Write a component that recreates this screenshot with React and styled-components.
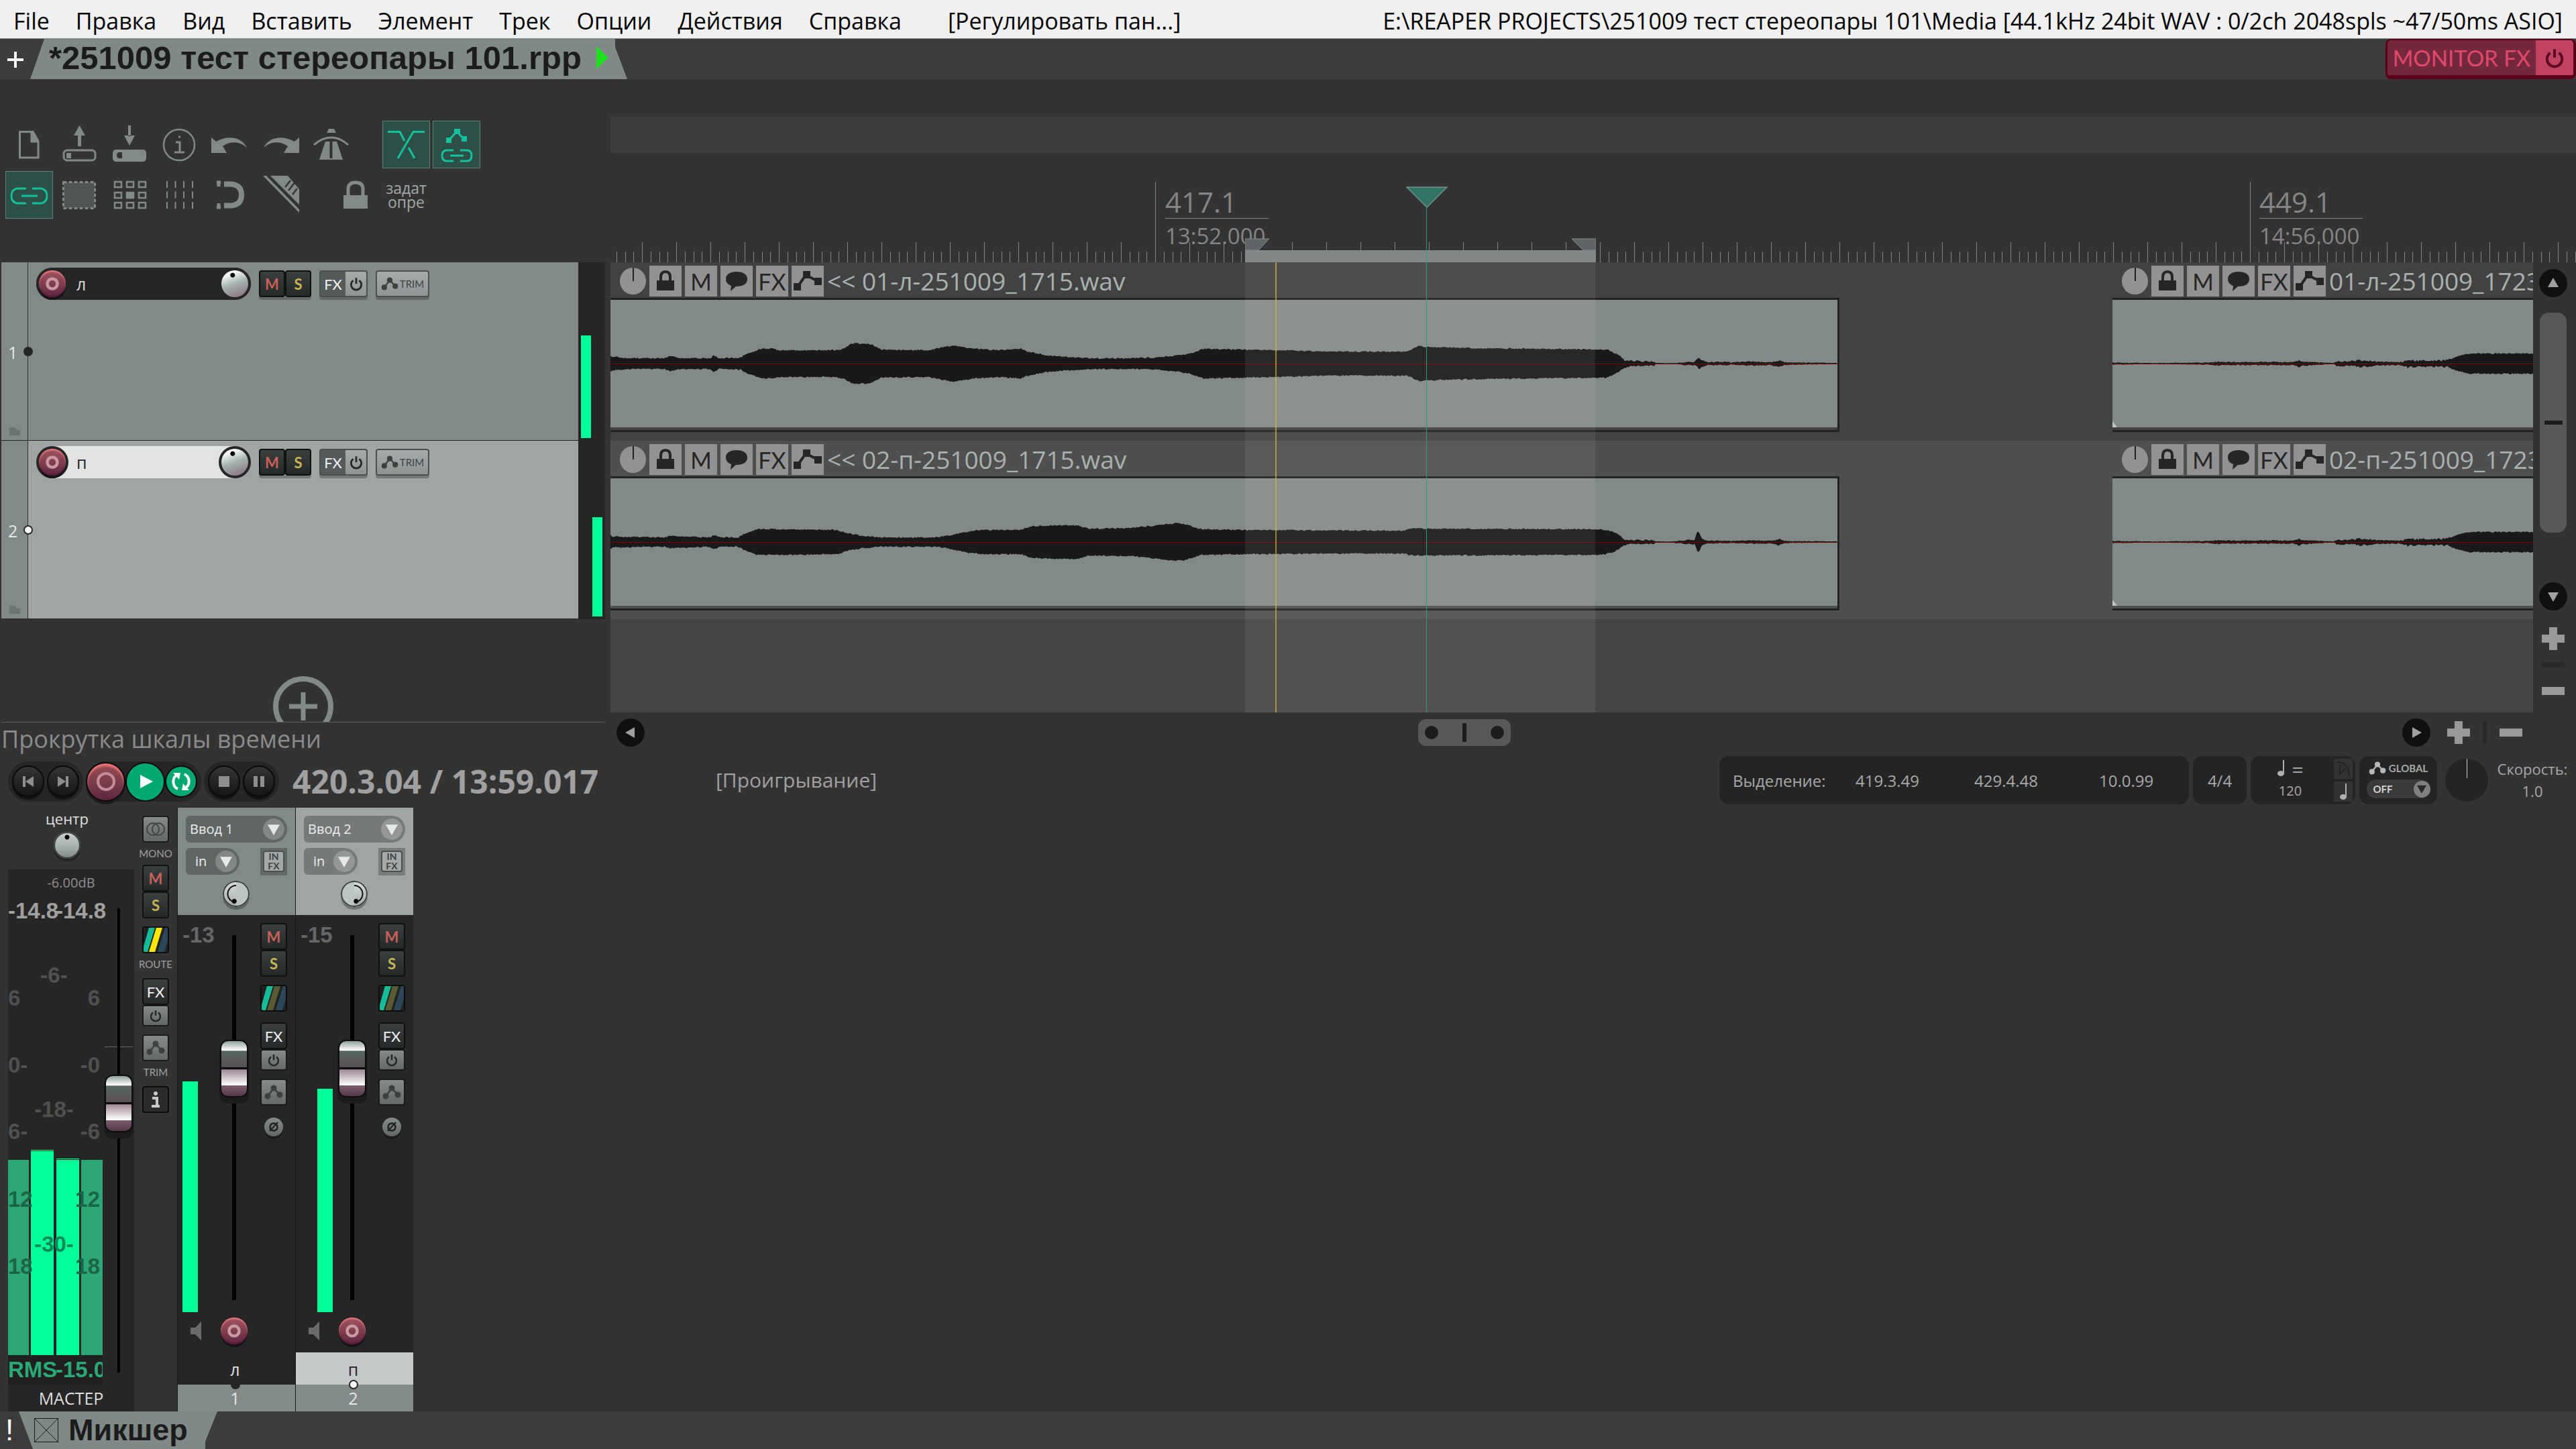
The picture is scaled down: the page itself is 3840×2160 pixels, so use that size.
import { useState } from "react";
import styled, { createGlobalStyle, css } from "styled-components";

const MENU = ["File", "Правка", "Вид", "Вставить", "Элемент", "Трек", "Опции", "Действия", "Справка"];

const TRACKS = [
  { id: 1, name: "л", selected: false, levels: [153, 0], volume: "-13", mixLevels: [344, 0], input: "Ввод 1" },
  { id: 2, name: "п", selected: true, levels: [0, 148], volume: "-15", mixLevels: [0, 333], input: "Ввод 2" },
];

// [x, half amplitude]
const WAVE_L1 = [[0, 12], [15, 10], [28, 9], [79, 9], [89, 12], [105, 9], [149, 9], [154, 13], [162, 9], [194, 10], [204, 16], [226, 23], [242, 23], [251, 21], [334, 21], [347, 23], [360, 31], [380, 31], [390, 29], [404, 22], [475, 21], [494, 25], [510, 28], [522, 26], [545, 23], [577, 21], [612, 23], [621, 19], [647, 14], [679, 11], [717, 9], [774, 9], [813, 10], [844, 13], [864, 16], [883, 23], [990, 21], [1075, 19], [1188, 19], [1205, 27], [1216, 26], [1290, 24], [1480, 22], [1486, 22], [1500, 15], [1512, 7], [1530, 5], [1556, 4], [1558, 1], [1590, 1], [1600, 3], [1615, 3], [1622, 9], [1630, 5], [1635, 3], [1667, 3], [1670, 2], [1690, 4], [1730, 3], [1742, 6], [1750, 3], [1780, 2], [1829, 1]];
const WAVE_R1 = [[0, 11], [4, 9], [81, 8], [87, 10], [147, 8], [155, 11], [166, 8], [190, 8], [202, 14], [217, 20], [281, 20], [338, 19], [353, 14], [378, 10], [402, 8], [487, 8], [511, 12], [535, 17], [553, 19], [612, 19], [626, 24], [656, 26], [695, 26], [713, 21], [778, 22], [814, 26], [842, 29], [856, 28], [881, 20], [947, 19], [1183, 18], [1192, 21], [1216, 21], [1478, 20], [1496, 16], [1511, 6], [1517, 4], [1555, 4], [1558, 1], [1583, 1], [1604, 4], [1616, 4], [1621, 18], [1627, 6], [1633, 3], [1668, 2], [1692, 3], [1735, 3], [1741, 7], [1747, 3], [1759, 2], [1829, 1]];
const WAVE_2 = [[0, 2], [60, 1], [141, 2], [156, 3], [160, 4], [171, 3], [271, 3], [278, 7], [285, 4], [300, 3], [331, 1], [334, 5], [351, 4], [373, 7], [391, 4], [431, 3], [441, 8], [451, 6], [491, 6], [503, 8], [516, 12], [531, 16], [640, 16]];

const noise = (n) => {
  const s = Math.sin(n * 127.1) * 43758.5453;
  return s - Math.floor(s);
};

function wavePath(points, mid) {
  const last = points[points.length - 1][0];
  const top = [];
  const bottom = [];
  let seg = 0;
  for (let x = 0; x <= last; x += 2) {
    while (points[seg + 1][0] < x) seg++;
    const [x0, a0] = points[seg];
    const [x1, a1] = points[seg + 1];
    const amp = a0 + ((a1 - a0) * (x - x0)) / (x1 - x0);
    const spread = amp < 8 ? amp * 0.5 : 2;
    top.push(`${x} ${(mid - amp + noise(x) * spread).toFixed(1)}`);
    bottom.unshift(`${x} ${(mid + amp - noise(x + 7) * spread).toFixed(1)}`);
  }
  return `M${top.join("L")}L${bottom.join("L")}Z`;
}

const CLIPS = [
  [
    { name: "<< 01-л-251009_1715.wav", wave: WAVE_L1, ends: true },
    { name: "01-л-251009_1723.wav", wave: WAVE_2 },
  ],
  [
    { name: "<< 02-п-251009_1715.wav", wave: WAVE_R1, ends: true },
    { name: "02-п-251009_1723.wav", wave: WAVE_2 },
  ],
];

/* ---------- icons ---------- */

const Svg = ({ w = 71, h = w, box, children }) => (
  <svg width={w} height={h} viewBox={box || `0 0 ${w} ${h}`} fill="none" aria-hidden="true">{children}</svg>
);

const GREY = "#828a88";
const TEAL = "#14bf9c";

const TOOL_ICONS = {
  file: (
    <>
      <path d="M21.5 16.5H39V31H49V55H21.5Z" stroke={GREY} strokeWidth="3" />
      <path d="M38 15H42L50 29V32H38Z" fill={GREY} />
    </>
  ),
  upload: (
    <>
      <rect x="12" y="44" width="47" height="15" rx="5" stroke={GREY} strokeWidth="3" />
      <path d="M16 48h7v8h-7zM33 22h5v16h-5zM27 22L35.500 7 44 22z" fill={GREY} />
    </>
  ),
  download: (
    <>
      <rect x="10" y="43" width="50" height="18" rx="5" fill={GREY} />
      <path d="M33 7h4v16h-4zM27 22L35 37 43 22z" fill={GREY} />
      <path d="M24 47h-6q-4 4.500 0 9h6z" fill="#333" />
    </>
  ),
  info: (
    <>
      <circle cx="34" cy="36" r="23" stroke={GREY} strokeWidth="2.500" />
      <path d="M29 32h6v15M27 47h15M33 24h3" stroke={GREY} strokeWidth="3" />
    </>
  ),
  undo: <path d="M7 25L14 31C32 21 52 24 60 40C49 30 34 30 24 38L30 48H7Z" fill={GREY} />,
  redo: <path d="M63 25L56 31C38 21 18 24 10 40C21 30 36 30 46 38L40 48H63Z" fill={GREY} />,
  metronome: (
    <>
      <path d="M27 31H44L53 58H18Z" fill={GREY} />
      <path d="M35.500 29V56" stroke="#333" strokeWidth="4" />
      <path d="M10 36Q22 25 35.500 25T61 36" stroke={GREY} strokeWidth="3" />
      <path d="M29 18L32 12H40L43 18Z" fill={GREY} />
    </>
  ),
  crossfade: <path d="M8 16.500H26L33 30M63 16.500H46L23 56M39 40L48 56" stroke={TEAL} strokeWidth="3" />,
  envelope: (
    <>
      <path d="M24 29L36 16L47 28" stroke={TEAL} strokeWidth="3" />
      <path d="M20 25h8v8h-8zM32 12h9v8h-9zM43 23h8v8h-8z" fill={TEAL} />
      <path d="M31 44H21q-7 0-7 8t7 8h10M41 44h10q7 0 7 8t-7 8H41M26 52h20" stroke={TEAL} strokeWidth="3" />
    </>
  ),
  link: <path d="M31 26H17q-8 2-8 11t8 11H31M40 26H54q8 2 8 11t-8 11H40M24 37h24" stroke={TEAL} strokeWidth="3" />,
  marquee: (
    <>
      <rect x="12" y="17" width="46" height="38" fill="#505656" />
      <rect x="11.500" y="16.500" width="47" height="39" stroke={GREY} strokeWidth="3" strokeDasharray="5 3" />
    </>
  ),
  grid: (
    <>
      {[17, 35, 53].map((x) => [20, 36, 51].map((y) => (
        <rect key={`${x}-${y}`} x={x - 4} y={y - 4} width="10" height="8" stroke={GREY} strokeWidth="2.500" fill={x === 35 && y === 36 ? GREY : "none"} />
      )))}
    </>
  ),
  lines: <path d="M16 15v41M28.500 15v41M41 15v41M54 15v41" stroke={GREY} strokeWidth="2" strokeDasharray="10 5.500" />,
  magnet: (
    <>
      <path d="M26 19.500H37Q52 21 52 35.500T37 51.500H26" stroke={GREY} strokeWidth="8" />
      <path d="M15 17h6M18 15v8M15 54h6M18 48v8" stroke={GREY} strokeWidth="5" />
    </>
  ),
  ruler: (
    <>
      <path d="M9 7H14L63 57V62Z" fill={GREY} />
      <path d="M20 7H46L63 27V50Z" fill={GREY} />
      <path d="M47 29L58 15M42 24L50 14M53 35L60 26" stroke="#333" strokeWidth="2.500" />
    </>
  ),
  lock: (
    <>
      <path d="M24 37V27q0-10 11-10t11 10V37" stroke={GREY} strokeWidth="5" />
      <rect x="17" y="36" width="36" height="20" fill={GREY} />
    </>
  ),
};

const Power = ({ size = 20, color = "#262626" }) => (
  <Svg w={size} box="0 0 20 20">
    <path d="M6 5.500a7 7 0 1 0 8 0M10 2v8" stroke={color} strokeWidth="2.500" />
  </Svg>
);

const Nodes = ({ size = 28, color = "#3c4040" }) => (
  <Svg w={size} h={size - 6} box="0 0 28 22">
    <path d="M5 17L14 5L23 15" stroke={color} strokeWidth="2.500" />
    <g fill={color}><circle cx="5" cy="17" r="4.500" /><circle cx="14" cy="5" r="4.500" /><circle cx="23" cy="15" r="4.500" /></g>
  </Svg>
);

const Arrow = ({ dir, size = 16, color = "#a0a0a0" }) => {
  const turn = { right: 0, down: 90, left: 180, up: 270 }[dir];
  return (
    <Svg w={size} box="0 0 16 16">
      <path d="M2 0L16 8L2 16Z" fill={color} transform={`rotate(${turn} 8 8)`} />
    </Svg>
  );
};

const Plus = () => <Svg w={34}><path d="M11 0h12v11h11v12H23v11H11V23H0V11h11z" fill="#999" /></Svg>;
const Minus = () => <Svg w={34} h={12}><rect width="34" height="12" fill="#999" /></Svg>;

const Note = () => (
  <Svg w={12} h={24}>
    <path d="M10 0V19" stroke="#b0b0b0" strokeWidth="2" />
    <ellipse cx="6" cy="20" rx="5" ry="4" fill="#b0b0b0" />
  </Svg>
);

const Route = ({ bright }) => (
  <Svg w={36}>
    <rect width="36" height="36" fill="#1f2423" />
    <path d="M0 36V28L8 0H17L6 36Z" fill="#17bd9b" />
    <path d="M8 36L19 0H28L17 36Z" fill={bright ? "#ffe600" : "#5a5a33"} />
    <path d="M21 36L32 0H36V20L31 36Z" fill="#2d4759" />
  </Svg>
);

const Folder = () => <Svg w={16} h={12}><path d="M0 0H8L11 4H16V12H0Z" fill="#6c7472" /></Svg>;

const ITEM_ICONS = [
  ["Lock", <Svg key="l" w={28} h={32}><path d="M7 15V10q0-8 7-8t7 8v5" stroke="#262626" strokeWidth="4" /><path d="M1 15h26v15H1z" fill="#262626" /></Svg>],
  ["Mute", "M"],
  ["Notes", <Svg key="n" w={34} h={32}><path d="M17 2c10 0 16 4 16 11s-6 11-16 11h-1l-8 7 1-8C4 21 1 18 1 13 1 6 7 2 17 2z" fill="#262626" /></Svg>],
  ["Item FX", "FX"],
  ["Envelope", <Svg key="e" w={42} h={32}><path d="M5 26L18 7L36 16" stroke="#262626" strokeWidth="4" /><path d="M0 19h11v11H0zM14 1h11v11H14zM31 11h11v11H31z" fill="#262626" /></Svg>],
];

/* ---------- sections ---------- */

function MenuBar() {
  return (
    <Menu>
      {MENU.map((label) => <MenuButton key={label}>{label}</MenuButton>)}
      <MenuButton $wide>[Регулировать пан...]</MenuButton>
      <MenuStatus>E:\REAPER PROJECTS\251009 тест стереопары 101\Media [44.1kHz 24bit WAV : 0/2ch 2048spls ~47/50ms ASIO]</MenuStatus>
    </Menu>
  );
}

function ProjectTabs() {
  return (
    <TabBar>
      <NewTab aria-label="New project tab">
        <Svg w={24}><path d="M12 0V24M0 12H24" stroke="#fff" strokeWidth="4" /></Svg>
      </NewTab>
      <ProjectTab>
        *251009 тест стереопары 101.rpp
        <Svg w={18} h={34}><path d="M0 0L18 17L0 34Z" fill="#1fe01f" /></Svg>
      </ProjectTab>
      <MonitorFx>
        <MonitorLabel>MONITOR FX</MonitorLabel>
        <MonitorPower aria-label="Monitor FX bypass"><Power size={32} color="#5f0a22" /></MonitorPower>
      </MonitorFx>
    </TabBar>
  );
}

const ToolButton = ({ icon, active }) => (
  <Tool $active={active} aria-label={icon}><Svg w={71}>{TOOL_ICONS[icon]}</Svg></Tool>
);

function Toolbar() {
  return (
    <Tools>
      <ToolRow>
        {["file", "upload", "download", "info", "undo", "redo", "metronome"].map((i) => <ToolButton key={i} icon={i} />)}
        <ToolGap />
        <ToolButton icon="crossfade" active />
        <ToolButton icon="envelope" active />
      </ToolRow>
      <ToolRow>
        <ToolButton icon="link" active />
        {["marquee", "grid", "lines", "magnet", "ruler"].map((i) => <ToolButton key={i} icon={i} />)}
        <ToolGap />
        <ToolButton icon="lock" />
        <Tool>задат опре</Tool>
      </ToolRow>
    </Tools>
  );
}

const RecordDot = () => (
  <Svg w={20}><circle cx="10" cy="10" r="7.500" stroke="#c79aa3" strokeWidth="4.500" /></Svg>
);

function TrackPanel({ track }) {
  const [name, setName] = useState(track.name);
  return (
    <Panel>
      <PanelNumber>
        <NumberText>{track.id}</NumberText>
        <Folder />
        <FolderDot $selected={track.selected} />
      </PanelNumber>
      <PanelMain $selected={track.selected}>
        <NameBox $selected={track.selected}>
          <KnobRing><RecordArm aria-label="Record arm"><RecordDot /></RecordArm></KnobRing>
          <NameInput aria-label="Track name" $selected={track.selected} value={name} onChange={(e) => setName(e.target.value)} />
          <KnobRing><Knob type="range" aria-label="Volume" $tint $dot="42% 18%" /></KnobRing>
        </NameBox>
        <PanelButtons>
          <Pair><MiniButton $dark $color="#cb6058">M</MiniButton><MiniButton $dark $color="#c9b455">S</MiniButton></Pair>
          <Pair>
            <MiniButton $mid $color="#f2f2f2">FX</MiniButton>
            <MiniButton $narrow aria-label="FX bypass"><Power size={22} /></MiniButton>
          </Pair>
          <TrimButton><Nodes size={26} />TRIM</TrimButton>
        </PanelButtons>
      </PanelMain>
      <PanelMeter>
        {track.levels.map((h, i) => <Bar key={i} $w={15} style={{ height: h }} />)}
      </PanelMeter>
    </Panel>
  );
}

const PX_PER_MEASURE = 51;

function RulerTicks() {
  const ticks = [];
  for (let k = -63; k < 168; k++) {
    const x = Math.round(812 + (k * PX_PER_MEASURE) / 4);
    const top = k % 128 === 0 ? 43 : k % 4 === 0 ? 133 : 147;
    ticks.push(<path key={k} d={`M${x + 0.5} ${top}V163`} />);
  }
  return <TickLayer width="100%" height="163" aria-hidden="true" stroke="#858585">{ticks}</TickLayer>;
}

function Ruler() {
  return (
    <RulerBox>
      <RulerTicks />
      <RulerMark><b>417.1</b><span>13:52.000</span></RulerMark>
      <RulerMark><b>449.1</b><span>14:56.000</span></RulerMark>
      <RulerSelection>
        <Svg w={523} h={36}>
          <path d="M0 18H523V36H0Z" fill="#828887" />
          <path d="M0 1H36L20 18H0Z" fill="#5f6567" stroke="#858b8a" />
          <path d="M523 1H487L504 18H523Z" fill="#5f6567" stroke="#858b8a" />
        </Svg>
      </RulerSelection>
      <PlayMarker>
        <Svg w={62} h={113}>
          <path d="M1 1H61L31 31Z" fill="#337266" stroke="#74908a" strokeWidth="1.500" />
          <path d="M30.500 31V113" stroke="#2f9d86" />
        </Svg>
      </PlayMarker>
    </RulerBox>
  );
}

function Clip({ clip }) {
  return (
    <ClipBox $ends={clip.ends}>
      <ClipHead>
        <ItemKnob type="range" aria-label="Item volume" />
        {ITEM_ICONS.map(([label, icon]) => <ItemButton key={label} aria-label={label}>{icon}</ItemButton>)}
        <ClipName>{clip.name}</ClipName>
      </ClipHead>
      <ClipBody $ends={clip.ends}>
        <svg width="100%" height="190" aria-hidden="true">
          <path d={wavePath(clip.wave, 95)} fill="#191919" />
          <path d="M0 95.500H1900" stroke="#7c0000" />
          {!clip.ends && <path d="M0 181L7 190H0Z" fill="#c0c6c5" />}
        </svg>
      </ClipBody>
      <ClipFoot $ends={clip.ends} />
    </ClipBox>
  );
}

function Arrange() {
  return (
    <ArrangeGrid>
      <LeftColumn>
        <Toolbar />
        <Panels>{TRACKS.map((t) => <TrackPanel key={t.id} track={t} />)}</Panels>
        <AddArea>
          <AddTrack aria-label="Add track">
            <Svg w={90}><circle cx="45" cy="45" r="41" stroke={GREY} strokeWidth="8" /><path d="M45 24V66M24 45H66" stroke={GREY} strokeWidth="7" /></Svg>
          </AddTrack>
        </AddArea>
        <Hint>Прокрутка шкалы времени</Hint>
      </LeftColumn>
      <RightColumn>
        <MarkerStrip />
        <Ruler />
        <LanesRow>
          <Lanes>
            {CLIPS.map((lane, i) => (
              <Lane key={i} $alt={i === 1}>{lane.map((c) => <Clip key={c.name} clip={c} />)}</Lane>
            ))}
            <SelectionOverlay />
            <EditCursor />
            <PlayCursor />
          </Lanes>
          <VScroll>
            <RoundButton aria-label="Scroll up"><Arrow dir="up" /></RoundButton>
            <VThumb />
            <RoundButton aria-label="Scroll down"><Arrow dir="down" /></RoundButton>
            <ZoomStack>
              <Plain aria-label="Zoom in vertically"><Plus /></Plain>
              <ZoomMark $w={34} $h={8} />
              <Plain aria-label="Zoom out vertically"><Minus /></Plain>
            </ZoomStack>
          </VScroll>
        </LanesRow>
        <HScroll>
          <RoundButton aria-label="Scroll left"><Arrow dir="left" /></RoundButton>
          <HTrack><HThumb><i /><b /><i /></HThumb></HTrack>
          <RoundButton aria-label="Scroll right"><Arrow dir="right" /></RoundButton>
          <ZoomRow>
            <Plain aria-label="Zoom in"><Plus /></Plain>
            <ZoomMark $w={6} $h={34} />
            <Plain aria-label="Zoom out"><Minus /></Plain>
          </ZoomRow>
        </HScroll>
      </RightColumn>
    </ArrangeGrid>
  );
}

function Transport() {
  return (
    <TransportBar>
      <Pill>
        <RoundKey aria-label="Go to start"><Svg w={18}><path d="M1 1h4v16H1zM17 1v16L5 9z" fill="#8d8d8d" /></Svg></RoundKey>
        <RoundKey aria-label="Go to end"><Svg w={18}><path d="M13 1h4v16h-4zM1 1v16L13 9z" fill="#8d8d8d" /></Svg></RoundKey>
      </Pill>
      <Pill $tight>
        <RoundKey $big $red aria-label="Record"><Svg w={28}><circle cx="14" cy="14" r="12" stroke="#c08d98" strokeWidth="4" /></Svg></RoundKey>
        <RoundKey $big $green aria-label="Play"><Svg w={22}><path d="M3 1L22 11L3 21Z" fill="#fff" /></Svg></RoundKey>
        <RoundKey $green aria-label="Repeat">
          <Svg w={30}>
            <path d="M10 4.500A12 12 0 0 0 10 26M20 4A12 12 0 0 1 20 25.500" stroke="#fff" strokeWidth="4" />
            <path d="M3 2L14 2L12 12Z M27 28L16 28L18 18Z" fill="#fff" />
          </Svg>
        </RoundKey>
      </Pill>
      <Pill>
        <RoundKey aria-label="Stop"><Svg w={16}><rect width="16" height="16" fill="#8d8d8d" /></Svg></RoundKey>
        <RoundKey aria-label="Pause"><Svg w={16}><path d="M0 0h6v16H0zM10 0h6v16h-6z" fill="#8d8d8d" /></Svg></RoundKey>
      </Pill>
      <TimeText>420.3.04 / 13:59.017</TimeText>
      <PlayState>[Проигрывание]</PlayState>
      <Settings>
        <SelectionBox>
          <span>Выделение:</span><span>419.3.49</span><span>429.4.48</span><span>10.0.99</span>
        </SelectionBox>
        <SignatureBox>4/4</SignatureBox>
        <TempoBox>
          <TempoValue>
            <span><Note /> =</span>
            <small>120</small>
          </TempoValue>
          <TempoKeys>
            <TempoKey aria-label="Tap tempo"><Svg w={22} h={26}><path d="M2 3Q19 3 20 24M6 6V20L14 13" stroke="#222" strokeWidth="2" /></Svg></TempoKey>
            <TempoKey aria-label="Beat"><Note /></TempoKey>
          </TempoKeys>
        </TempoBox>
        <GlobalBox>
          <GlobalTitle><Nodes size={26} color="#b8b8b8" />GLOBAL</GlobalTitle>
          <GlobalSelect>
            <PlainSelect aria-label="Global automation"><option>OFF</option></PlainSelect>
            <SelectArrow $size={25} $bg="#808080"><Arrow dir="down" size={14} color="#2a2a2a" /></SelectArrow>
          </GlobalSelect>
        </GlobalBox>
        <RateKnob type="range" aria-label="Скорость" />
        <RateText><span>Скорость:</span><span>1.0</span></RateText>
      </Settings>
    </TransportBar>
  );
}

const SCALE_OUTER = [[103, "6", "6"], [203, "0-", "-0"], [302, "6-", "-6"], [403, "12", "12"], [503, "18", "18"]];
const SCALE_INNER = [[69, "-6-"], [269, "-18-"], [470, "-30-"]];

function MasterStrip() {
  return (
    <Master>
      <MasterLeft>
        <MasterPan>
          центр
          <Knob type="range" aria-label="Master pan" $dot="50% 20%" />
        </MasterPan>
        <MasterBox>
          <MasterDb>-6.00dB</MasterDb>
          <MasterRow>
            <MeterColumn>
              <Readout><span>-14.8</span><span>-14.8</span></Readout>
              <MeterArea>
                <Bar $w={31} $rms style={{ height: 291 }} />
                <Bar $w={34} $peak style={{ height: 304 }} />
                <Bar $w={34} $peak style={{ height: 291 }} />
                <Bar $w={32} $rms style={{ height: 291 }} />
                <ScaleLayer>
                  {SCALE_OUTER.map(([y, l, r]) => (
                    <ScaleLine key={y} $over={y > 340 && "#1b6446"} style={{ top: y }}><span>{l}</span><span>{r}</span></ScaleLine>
                  ))}
                  {SCALE_INNER.map(([y, l]) => (
                    <ScaleLine key={y} $center $over={y > 340 && "#078a55"} style={{ top: y }}>{l}</ScaleLine>
                  ))}
                </ScaleLayer>
              </MeterArea>
              <Readout $rms><span>RMS</span><span>-15.0</span></Readout>
            </MeterColumn>
            <MasterFader type="range" aria-label="Master volume" defaultValue="59" />
          </MasterRow>
          <MasterName>МАСТЕР</MasterName>
        </MasterBox>
      </MasterLeft>
      <MasterButtons>
        <MiniButton $grey aria-label="Mono">
          <Svg w={30} h={22}><circle cx="11" cy="11" r="9" stroke="#444" strokeWidth="2" /><circle cx="19" cy="11" r="9" stroke="#444" strokeWidth="2" /></Svg>
        </MiniButton>
        <Caption>MONO</Caption>
        <MiniButton $dark $color="#cb6058">M</MiniButton>
        <MiniButton $dark $color="#c9b455">S</MiniButton>
        <Spacer $h={12} />
        <MiniButton $route aria-label="Route"><Route bright /></MiniButton>
        <Caption>ROUTE</Caption>
        <Spacer $h={4} />
        <MiniButton $dark $light $color="#f2f2f2">FX</MiniButton>
        <MiniButton $grey $short aria-label="FX bypass"><Power size={20} /></MiniButton>
        <Spacer $h={12} />
        <MiniButton $grey aria-label="Trim"><Nodes /></MiniButton>
        <Caption>TRIM</Caption>
        <Spacer $h={4} />
        <MiniButton $outline aria-label="Track information">
          <Svg w={12} h={24}><path d="M1 10h7v13M0 22h12" stroke="#c8c8c8" strokeWidth="4" /><circle cx="6" cy="3" r="3" fill="#c8c8c8" /></Svg>
        </MiniButton>
      </MasterButtons>
    </Master>
  );
}

function ChannelStrip({ track }) {
  return (
    <Channel>
      <ChannelTop $selected={track.selected}>
        <InputSelect>
          <PlainSelect aria-label="Input"><option>{track.input}</option></PlainSelect>
          <SelectArrow $size={32}><Arrow dir="down" size={18} color="#e6e9e8" /></SelectArrow>
        </InputSelect>
        <InputRow>
          <InputSelect $short>
            <PlainSelect aria-label="Monitor"><option>in</option></PlainSelect>
            <SelectArrow $size={32}><Arrow dir="down" size={18} color="#e6e9e8" /></SelectArrow>
          </InputSelect>
          <InFx><button>IN FX</button></InFx>
        </InputRow>
        <Knob type="range" aria-label="Pan" $arc={track.selected ? "right" : "left"} $dot={track.selected ? "57% 78%" : "43% 78%"} />
      </ChannelTop>
      <ChannelBody>
        <ChannelMeter>
          <VolumeText>{track.volume}</VolumeText>
          <MeterPair>
            {track.mixLevels.map((h, i) => <Bar key={i} $w={23} style={{ height: h }} />)}
          </MeterPair>
        </ChannelMeter>
        <Fader type="range" aria-label="Volume" defaultValue="66" />
        <ChannelButtons>
          <MiniButton $dark $color="#cb6058">M</MiniButton>
          <MiniButton $dark $color="#c9b455">S</MiniButton>
          <Spacer $h={12} />
          <MiniButton $route aria-label="Route"><Route /></MiniButton>
          <Spacer $h={16} />
          <MiniButton $dark $light $color="#f2f2f2">FX</MiniButton>
          <MiniButton $grey $short aria-label="FX bypass"><Power size={20} /></MiniButton>
          <Spacer $h={12} />
          <MiniButton $grey aria-label="Trim"><Nodes /></MiniButton>
          <Spacer $h={18} />
          <PhaseButton aria-label="Phase">
            <Svg w={18}><circle cx="9" cy="9" r="5.500" stroke="#222" strokeWidth="2.500" /><path d="M3 15L15 2" stroke="#222" strokeWidth="2" /></Svg>
          </PhaseButton>
        </ChannelButtons>
      </ChannelBody>
      <ChannelRecord>
        <Svg w={16} h={28}><path d="M0 9h7L16 0V28L7 19H0Z" fill="#6b6b6b" /></Svg>
        <RecordArm aria-label="Record arm"><RecordDot /></RecordArm>
      </ChannelRecord>
      <ChannelName $selected={track.selected}>{track.name}</ChannelName>
      <ChannelNumber>{track.id}<ChannelDot $selected={track.selected} /></ChannelNumber>
    </Channel>
  );
}

export default function App() {
  return (
    <>
      <GlobalStyle />
      <Page>
        <MenuBar />
        <ProjectTabs />
        <Arrange />
        <Transport />
        <Mixer>
          <MasterStrip />
          {TRACKS.map((t) => <ChannelStrip key={t.id} track={t} />)}
        </Mixer>
        <Docker>
          <DockMark>!</DockMark>
          <DockTab>
            <input type="checkbox" id="dock-mixer" defaultChecked />
            <label htmlFor="dock-mixer">Микшер</label>
          </DockTab>
        </Docker>
      </Page>
    </>
  );
}

/* ---------- styles ---------- */

const GlobalStyle = createGlobalStyle`
  * { box-sizing: border-box; }
  body {
    margin: 0;
    background: #333;
    font-family: "Open Sans", "Noto Sans", sans-serif;
  }
  button, input, select { margin: 0; padding: 0; border: 0; background: none; font: inherit; color: inherit; }
  svg { display: block; flex: none; }
`

const caption = css`
  font-family: "Lato", sans-serif;
  font-size: 15px;
`

const Page = styled.div`
  display: flex;
  flex-direction: column;
  min-height: 100vh;
`

const Menu = styled.nav`
  display: flex;
  align-items: center;
  height: 58px;
  padding: 4px 20px 0;
  gap: 39px;
  background: #f0f0f0;
  border-bottom: 1px solid #828a88;
  font-size: 34px;
  color: #000;
`

const MenuButton = styled.button`
  white-space: nowrap;
  margin-left: ${(p) => (p.$wide ? "30px" : "0")};
`

const MenuStatus = styled.span`
  margin-left: auto;
  white-space: nowrap;
`

const TabBar = styled.header`
  display: flex;
  height: 60px;
  background: #3c3c3c;
`

const NewTab = styled.button`
  width: 45px;
  padding: 2px 0 0 11px;
`

const ProjectTab = styled.button`
  display: flex;
  align-items: center;
  gap: 22px;
  width: 890px;
  padding: 0 0 4px 28px;
  clip-path: polygon(21px 0, 872px 0, 872px 12px, 100% 100%, 0 100%);
  background: #7f8a88;
  color: #1c1c1c;
  font: bold 49px "Liberation Sans", sans-serif;
  white-space: nowrap;
`

const MonitorFx = styled.div`
  display: flex;
  width: 284px;
  margin-left: auto;
  border: solid #5c0018;
  border-width: 2px 4px 6px 3px;
  border-radius: 8px;
  overflow: hidden;
`

const MonitorLabel = styled.button`
  flex: 1;
  background: #75283c;
  color: #e0486c;
  font: 33px "Lato", sans-serif;
  white-space: nowrap;
`

const MonitorPower = styled.button`
  display: flex;
  align-items: center;
  justify-content: center;
  width: 56px;
  background: #c24262;
`

const ArrangeGrid = styled.main`
  display: grid;
  grid-template-columns: 910px 1fr;
`

const LeftColumn = styled.div`
  display: flex;
  flex-direction: column;
  padding: 0 8px 0 2px;
`

const Tools = styled.div`
  display: flex;
  flex-direction: column;
  gap: 4px;
  height: 273px;
  padding: 62px 6px 0;
`

const ToolRow = styled.div`
  display: flex;
  gap: 4px;
`

const ToolGap = styled.span`
  width: 33px;
`

const Tool = styled.button`
  width: 71px;
  height: 71px;
  color: #a3a8a7;
  font-size: 23px;
  line-height: 21px;
  ${(p) => p.$active && css`
    background: #2c5048;
    box-shadow: inset 0 0 0 1px #5f7f78;
  `}
`

const Panels = styled.div`
  display: flex;
  flex-direction: column;
`

const Panel = styled.section`
  display: flex;
  height: 266px;
  border-bottom: 1px solid #262626;
`

const PanelNumber = styled.div`
  position: relative;
  display: flex;
  flex-direction: column;
  justify-content: flex-end;
  gap: 98px;
  width: 40px;
  padding: 0 0 7px 12px;
  background: #828a88;
  border-right: 1px solid #333;
`

const NumberText = styled.span`
  color: #e4e7e6;
  font-size: 25px;
  line-height: 28px;
  margin-left: -2px;
`

const FolderDot = styled.i`
  position: absolute;
  right: -8px;
  top: 126px;
  width: 14px;
  height: 14px;
  border: 2px solid #262626;
  border-radius: 50%;
  background: ${(p) => (p.$selected ? "#fff" : "#262626")};
`

const PanelMain = styled.div`
  display: flex;
  flex: 1;
  align-items: flex-start;
  gap: 12px;
  padding: 8px 12px;
  background: ${(p) => (p.$selected ? "#9fa5a4" : "#828a88")};
`

const NameBox = styled.div`
  display: flex;
  align-items: center;
  width: 320px;
  height: 48px;
  border-radius: 24px;
  background: ${(p) => (p.$selected ? "linear-gradient(90deg, transparent 24px, #e2e4e3 24px, #e2e4e3 296px, transparent 296px)" : "#262626")};
`

const KnobRing = styled.span`
  display: flex;
  align-items: center;
  justify-content: center;
  width: 48px;
  height: 48px;
  border-radius: 50%;
  background: #262626;
`

const NameInput = styled.input`
  flex: 1;
  min-width: 0;
  padding-left: 12px;
  font-size: 25px;
  color: ${(p) => (p.$selected ? "#262626" : "#d8d8d8")};
  outline: none;
`

const RecordArm = styled.button`
  display: flex;
  align-items: center;
  justify-content: center;
  width: 40px;
  height: 40px;
  border-radius: 50%;
  background: linear-gradient(#a55560, #7a3a4c 60%, #5c2440);
  box-shadow: inset 0 2px 2px #f07c80, inset 0 -2px 2px #5a1a3c, 0 4px 0 #151515;
`

const Knob = styled.input`
  appearance: none;
  width: 40px;
  height: 40px;
  border-radius: 50%;
  background:
    radial-gradient(circle at ${(p) => p.$dot}, #000 3px, transparent 4px),
    linear-gradient(${(p) => (p.$tint ? "160deg, #fff 15%, #a3b3ae 50%, #8a6a7c" : "#ccd3d2, #a7b0ae 55%, #7c8583")});
  box-shadow: ${(p) => (p.$tint ? "none" : "inset 0 0 0 2px #3a3f3e, 0 4px 0 rgba(0, 0, 0, .3)")};
  ${(p) => p.$arc && css`
    background:
      radial-gradient(circle at ${p.$dot}, #000 3px, transparent 4px),
      linear-gradient(${p.$arc === "right" ? "270deg" : "90deg"}, transparent 50%, #bdc5c3 50%),
      radial-gradient(circle, transparent 11px, #111 12px, #111 13px, transparent 14px),
      linear-gradient(#d8dfdd, #a3acaa);
  `}
  &::-webkit-slider-thumb { appearance: none; width: 1px; height: 1px; }
`

const MiniButton = styled.button`
  display: flex;
  align-items: center;
  justify-content: center;
  width: 40px;
  height: ${(p) => (p.$short ? 32 : 40)}px;
  border: 2px solid #4b504f;
  border-radius: 4px;
  background: linear-gradient(#a5acab, #8d9493);
  color: ${(p) => p.$color || "#262626"};
  font: 22px "Lato", sans-serif;
  flex: none;
  ${(p) => p.$mid && css`background: #555b5a; border-right: 0; border-radius: 4px 0 0 4px;`}
  ${(p) => p.$narrow && css`border-left: 0; border-radius: 0 4px 4px 0;`}
  ${(p) => p.$dark && css`background: linear-gradient(#3a3f40, #262929); border-color: #111; font-weight: bold;`}
  ${(p) => p.$light && css`font-weight: normal;`}
  ${(p) => p.$grey && css`background: linear-gradient(#858a8a, #626868); border-color: #1a1a1a;`}
  ${(p) => p.$outline && css`background: #2b2b2b; border-color: #0d0d0d;`}
  ${(p) => p.$route && css`border-color: #0d0d0d; overflow: hidden;`}
`

const PanelButtons = styled.div`
  display: flex;
  gap: 12px;
  padding-top: 4px;
`

const Pair = styled.div`
  display: flex;
  border-radius: 4px;
  box-shadow: 0 4px 0 rgba(40, 44, 43, .35);
  ${MiniButton} { width: 39px; }
  ${MiniButton}:only-child, ${MiniButton}[aria-label] { width: 33px; }
`

const TrimButton = styled.button`
  display: flex;
  align-items: center;
  justify-content: center;
  gap: 2px;
  width: 80px;
  height: 40px;
  border: 2px solid #4b504f;
  border-radius: 4px;
  background: linear-gradient(#a5acab, #8d9493);
  box-shadow: 0 4px 0 rgba(40, 44, 43, .35);
  color: #3f4443;
  ${caption}
`

const PanelMeter = styled.div`
  display: flex;
  align-items: flex-end;
  gap: 2px;
  width: 40px;
  padding: 0 4px 3px;
  background: #262626;
`

const Bar = styled.i`
  flex: none;
  width: ${(p) => p.$w}px;
  background: ${(p) => (p.$rms ? "#2ba876" : "#00ff96")};
  ${(p) => p.$peak && css`box-shadow: 0 -1px 0 #262626, 0 -2px 0 #00ff96;`}
`

const AddArea = styled.div`
  display: flex;
  justify-content: center;
  height: 153px;
  padding-top: 85px;
  overflow: hidden;
`

const AddTrack = styled.button`
  display: block;
  height: 90px;
`

const Hint = styled.p`
  margin: 0;
  border-top: 1px solid #5a5a5a;
  color: #8b8b8b;
  font-size: 36px;
  line-height: 50px;
  height: 46px;
`

const RightColumn = styled.div`
  display: flex;
  flex-direction: column;
  min-width: 0;
`

const MarkerStrip = styled.div`
  height: 54px;
  margin-top: 56px;
  background: #3c3c3c;
`

const RulerBox = styled.div`
  position: relative;
  display: flex;
  height: 163px;
  padding: 53px 0 0 827px;
  gap: 1477px;
  overflow: hidden;
`

const TickLayer = styled.svg`
  position: absolute;
  inset: 0;
`

const RulerMark = styled.div`
  display: flex;
  flex-direction: column;
  flex: none;
  width: 154px;
  color: #858585;
  b {
    padding-bottom: 5px;
    font-weight: normal;
    font-size: 42px;
    line-height: 39px;
    border-bottom: 1px solid #858585;
  }
  span {
    font-size: 33px;
    line-height: 52px;
  }
`

const RulerSelection = styled.div`
  position: absolute;
  left: 946px;
  bottom: 0;
`

const PlayMarker = styled.div`
  position: absolute;
  left: 1186px;
  top: 50px;
`

const LanesRow = styled.div`
  display: flex;
`

const Lanes = styled.div`
  position: relative;
  flex: 1;
  min-width: 0;
  height: 671px;
  background: #454545;
`

const Lane = styled.div`
  display: flex;
  gap: 407px;
  height: 266px;
  background: ${(p) => (p.$alt ? "#4f4f4f" : "#424242")};
`

const ClipBox = styled.article`
  flex: ${(p) => (p.$ends ? "0 0 1832px" : "1 1 0")};
  min-width: 0;
  overflow: hidden;
`

const ClipHead = styled.div`
  display: flex;
  align-items: center;
  gap: 5px;
  height: 53px;
  padding: 3px 0 0 14px;
`

const ItemKnob = styled.input`
  appearance: none;
  flex: none;
  width: 39px;
  height: 40px;
  border-radius: 50%;
  background: linear-gradient(#222, #222) 50% 0 / 2px 50% no-repeat #929292;
  &::-webkit-slider-thumb { appearance: none; width: 1px; height: 1px; }
`

const ItemButton = styled.button`
  display: flex;
  align-items: center;
  justify-content: center;
  flex: none;
  width: 48px;
  height: 46px;
  background: #929292;
  color: #262626;
  font: 34px "Lato", sans-serif;
`

const ClipName = styled.span`
  color: #a9b1af;
  font-size: 37px;
  line-height: 46px;
  white-space: nowrap;
`

const ClipBody = styled.div`
  height: 193px;
  border-top: 3px solid #222;
  border-right: ${(p) => (p.$ends ? "3px solid #222" : "0")};
  background: #828a88;
`

const ClipFoot = styled.div`
  height: 7px;
  border-bottom: 3px solid #222;
  border-right: ${(p) => (p.$ends ? "3px solid #222" : "0")};
`

const SelectionOverlay = styled.div`
  position: absolute;
  left: 946px;
  top: 0;
  bottom: 0;
  width: 522px;
  background: rgba(255, 255, 255, .065);
`

const EditCursor = styled.div`
  position: absolute;
  left: 991px;
  top: 0;
  bottom: 0;
  width: 2px;
  background: rgba(220, 180, 70, .65);
`

const PlayCursor = styled(EditCursor)`
  left: 1216px;
  width: 1px;
  background: #2f9d86;
`

const VScroll = styled.div`
  display: flex;
  flex-direction: column;
  align-items: center;
  gap: 23px;
  width: 64px;
  padding: 10px 4px 0 0;
`

const RoundButton = styled.button`
  display: flex;
  align-items: center;
  justify-content: center;
  flex: none;
  width: 42px;
  height: 42px;
  border-radius: 50%;
  background: #101010;
`

const VThumb = styled.div`
  width: 40px;
  height: 328px;
  margin-bottom: 51px;
  border-radius: 14px;
  background: linear-gradient(#1c1c1c, #1c1c1c) 50% 50% / 27px 6px no-repeat #585858;
`

const ZoomStack = styled.div`
  display: flex;
  flex-direction: column;
  gap: 18px;
  align-items: center;
  padding-top: 2px;
`

const Plain = styled.button`
  display: block;
`

const ZoomMark = styled.i`
  width: ${(p) => p.$w}px;
  height: ${(p) => p.$h}px;
  margin: ${(p) => (p.$w > p.$h ? "0 0 11px" : "0")};
  background: #292929;
`

const HScroll = styled.div`
  display: flex;
  align-items: center;
  height: 60px;
  padding: 0 80px 0 9px;
`

const HTrack = styled.div`
  flex: 1;
`

const HThumb = styled.div`
  display: flex;
  align-items: center;
  justify-content: space-between;
  width: 138px;
  height: 40px;
  margin-left: 44%;
  padding: 0 10px;
  border-radius: 12px;
  background: #585858;
  i { width: 20px; height: 20px; border-radius: 50%; background: #1c1c1c; }
  b { width: 6px; height: 28px; background: #1c1c1c; }
`

const ZoomRow = styled.div`
  display: flex;
  align-items: center;
  gap: 19px;
  padding-left: 25px;
`

const TransportBar = styled.div`
  display: flex;
  align-items: center;
  gap: 4px;
  height: 82px;
  padding: 4px 16px 0 12px;
`

const Pill = styled.div`
  display: flex;
  align-items: center;
  gap: ${(p) => (p.$tight ? 0 : 4)}px;
  height: 60px;
  padding: 0 ${(p) => (p.$tight ? "6px 0 0" : "6px")};
  border-radius: 30px;
  background: #262626;
`

const RoundKey = styled.button`
  display: flex;
  align-items: center;
  justify-content: center;
  width: ${(p) => (p.$big ? 59 : 48)}px;
  height: ${(p) => (p.$big ? 59 : 48)}px;
  border: 2px solid #0a0a0a;
  border-radius: 50%;
  background: linear-gradient(#353535, #141414);
  box-shadow: 0 3px 0 #141414;
  ${(p) => p.$red && css`
    background: linear-gradient(#9a4c55, #743a48 60%, #5c2440);
    box-shadow: inset 0 4px 3px #ee7478, 0 4px 0 #1c1c1c;
  `}
  ${(p) => p.$green && css`background: #02a871; box-shadow: none;`}
`

const TimeText = styled.strong`
  width: 627px;
  margin-left: 16px;
  color: #a0a0a0;
  font-size: 48px;
  line-height: 60px;
  white-space: nowrap;
`

const PlayState = styled.span`
  padding-bottom: 6px;
  color: #a0a0a0;
  font-size: 30px;
  white-space: nowrap;
`

const Settings = styled.div`
  display: flex;
  align-items: center;
  gap: 6px;
  margin-left: auto;
  padding-bottom: 4px;
  color: #a8a8a8;
  font-size: 24px;
  white-space: nowrap;
`

const Box = styled.div`
  display: flex;
  align-items: center;
  height: 72px;
  border-radius: 14px;
  background: #242424;
`

const SelectionBox = styled(Box)`
  display: grid;
  grid-template-columns: 183px 177px 186px auto;
  width: 700px;
  padding-left: 20px;
`

const SignatureBox = styled(Box)`
  justify-content: center;
  width: 80px;
`

const TempoBox = styled(Box)`
  width: 156px;
  padding-right: 4px;
`

const TempoValue = styled.div`
  display: flex;
  flex: 1;
  flex-direction: column;
  align-items: center;
  gap: 4px;
  padding-right: 6px;
  span { display: flex; gap: 10px; line-height: 28px; font-size: 30px; }
  small { font-size: 20px; line-height: 28px; }
`

const TempoKeys = styled.div`
  display: flex;
  flex-direction: column;
  gap: 4px;
`

const TempoKey = styled.button`
  display: flex;
  align-items: center;
  justify-content: center;
  width: 28px;
  height: 30px;
  background: #333;
`

const GlobalBox = styled(Box)`
  flex-direction: column;
  gap: 4px;
  width: 116px;
  padding: 5px 10px;
  ${caption}
  font-weight: bold;
`

const GlobalTitle = styled.span`
  display: flex;
  align-items: center;
  gap: 4px;
  line-height: 26px;
`

const GlobalSelect = styled.div`
  display: flex;
  align-items: center;
  width: 95px;
  height: 28px;
  padding-left: 10px;
  border-radius: 14px;
  background: #3a3a3a;
  color: #d0d0d0;
`

const PlainSelect = styled.select`
  flex: 1;
  min-width: 0;
  appearance: none;
`

const SelectArrow = styled.span`
  display: flex;
  align-items: center;
  justify-content: center;
  width: ${(p) => p.$size}px;
  height: ${(p) => p.$size}px;
  border-radius: 50%;
  background: ${(p) => p.$bg || "rgba(255, 255, 255, .22)"};
  pointer-events: none;
`

const RateKnob = styled.input`
  appearance: none;
  width: 64px;
  height: 64px;
  margin: 0 11px 0 6px;
  border-radius: 50%;
  background: linear-gradient(#ccc, #ccc) 50% 0 / 1px 45% no-repeat #242424;
  &::-webkit-slider-thumb { appearance: none; width: 1px; height: 1px; }
`

const RateText = styled.div`
  display: flex;
  flex-direction: column;
  align-items: center;
  width: 98px;
  font-size: 22px;
  line-height: 33px;
`

const Mixer = styled.section`
  display: flex;
  flex: 1;
`

const Master = styled.div`
  display: flex;
  width: 264px;
  padding-left: 12px;
`

const MasterLeft = styled.div`
  display: flex;
  flex-direction: column;
  width: 188px;
`

const MasterPan = styled.div`
  display: flex;
  flex-direction: column;
  align-items: center;
  gap: 6px;
  height: 92px;
  padding: 2px 12px 0 0;
  color: #e0e0e0;
  font-size: 22px;
  line-height: 28px;
`

const MasterBox = styled.div`
  display: flex;
  flex-direction: column;
  flex: 1;
  background: #262626;
`

const MasterDb = styled.span`
  padding-top: 6px;
  color: #8f8f8f;
  font-size: 20px;
  line-height: 28px;
  height: 42px;
  text-align: center;
`

const MasterRow = styled.div`
  display: flex;
  flex: 1;
`

const MeterColumn = styled.div`
  display: flex;
  flex-direction: column;
  width: 141px;
  font: bold 33px/44px "Liberation Sans", sans-serif;
`

const Readout = styled.div`
  display: flex;
  justify-content: space-between;
  height: ${(p) => (p.$rms ? 44 : 46)}px;
  color: ${(p) => (p.$rms ? "#2ba876" : "#a0a0a0")};
  background: ${(p) => (p.$rms ? "#202020" : "none")};
  overflow: ${(p) => (p.$rms ? "hidden" : "visible")};
  line-height: ${(p) => (p.$rms ? 44 : 40)}px;
  white-space: nowrap;
  span { width: 70px; }
`

const MeterArea = styled.div`
  position: relative;
  display: flex;
  flex: 1;
  align-items: flex-end;
  justify-content: space-between;
`

const ScaleLayer = styled.div`
  position: absolute;
  inset: 0;
`

const ScaleLine = styled.div`
  position: absolute;
  left: 0;
  right: 0;
  display: flex;
  justify-content: ${(p) => (p.$center ? "center" : "space-between")};
  padding: 0 4px 0 0;
  margin-top: -21px;
  color: ${(p) => p.$over || "#505050"};
`

const faderThumb = css`
  appearance: none;
  width: 42px;
  height: 86px;
  border: 2px solid #0d0d0d;
  border-radius: 12px;
  background: linear-gradient(#8fa19b, #fff 17%, #56685f 18%, #5a5054 47%, #0d0d0d 48%, #0d0d0d 51%, #a08a96 52%, #fff 80%, #7a5c6c 81%, #54384a);
  box-shadow: 0 8px 0 1px #1b1b1b;
`

const Fader = styled.input`
  appearance: none;
  writing-mode: vertical-lr;
  direction: rtl;
  width: 42px;
  height: 544px;
  margin-top: 30px;
  background: linear-gradient(#000, #000) 50% 0 / 6px 100% no-repeat;
  &::-webkit-slider-thumb { ${faderThumb} }
`

const MasterFader = styled(Fader)`
  height: 692px;
  margin: 16px 0 0 3px;
  background:
    linear-gradient(#000, #000) 50% 0 / 4px 100% no-repeat,
    linear-gradient(#666, #666) 0 206px / 100% 1px no-repeat;
`

const MasterName = styled.div`
  height: 40px;
  color: #ddd;
  font-size: 25px;
  line-height: 40px;
  text-align: center;
`

const MasterButtons = styled.div`
  display: flex;
  flex-direction: column;
  align-items: center;
  width: 64px;
  padding-top: 12px;
`

const Caption = styled.span`
  height: 33px;
  color: #a0a0a0;
  ${caption}
  line-height: 33px;
`

const Spacer = styled.i`
  height: ${(p) => p.$h}px;
`

const Channel = styled.div`
  display: flex;
  flex-direction: column;
  width: 176px;
  background: #262626;
  box-shadow: inset 1px 0 0 #1a1a1a;
`

const ChannelTop = styled.div`
  display: flex;
  flex-direction: column;
  gap: 8px;
  height: 160px;
  padding: 12px;
  margin-left: 1px;
  background: ${(p) => (p.$selected ? "#9fa5a4" : "#828a88")};
  > input { margin-left: 55px; }
`

const InputSelect = styled.div`
  display: flex;
  align-items: center;
  width: ${(p) => (p.$short ? "80px" : "100%")};
  height: 40px;
  padding: 0 4px 0 ${(p) => (p.$short ? 14 : 6)}px;
  border-radius: 6px 20px 20px 6px;
  background: rgba(0, 0, 0, .26);
  color: #eceeed;
  font-size: 20px;
`

const InputRow = styled.div`
  display: flex;
  justify-content: space-between;
`

const InFx = styled.div`
  padding: 4px;
  background: rgba(0, 0, 0, .24);
  button {
    width: 32px;
    height: 32px;
    border: 2px solid #4b504f;
    border-radius: 4px;
    background: #a3aaa9;
    color: #3f4443;
    font: bold 14px/14px "Lato", sans-serif;
  }
`

const ChannelBody = styled.div`
  display: flex;
  flex: 1;
`

const ChannelMeter = styled.div`
  display: flex;
  flex-direction: column;
  justify-content: space-between;
  width: 64px;
  padding: 8px 0 0 8px;
`

const VolumeText = styled.span`
  color: #666;
  font: bold 33px/44px "Liberation Sans", sans-serif;
`

const MeterPair = styled.div`
  display: flex;
  align-items: flex-end;
  gap: 2px;
`

const ChannelButtons = styled.div`
  display: flex;
  flex-direction: column;
  align-items: center;
  width: 40px;
  margin-left: 18px;
  padding-top: 12px;
`

const PhaseButton = styled.button`
  display: flex;
  align-items: center;
  justify-content: center;
  width: 28px;
  height: 28px;
  border-radius: 50%;
  background: linear-gradient(#858a8a, #626868);
  box-shadow: 0 4px 0 #1c1c1c;
`

const ChannelRecord = styled.div`
  display: flex;
  align-items: center;
  gap: 29px;
  height: 60px;
  padding: 0 0 4px 20px;
`

const ChannelName = styled.div`
  height: 48px;
  padding-right: 4px;
  background: ${(p) => (p.$selected ? "#c5c9c9" : "#262626")};
  color: ${(p) => (p.$selected ? "#262626" : "#e0e0e0")};
  font-size: 25px;
  line-height: 50px;
  text-align: center;
  margin-left: 1px;
`

const ChannelNumber = styled.div`
  position: relative;
  height: 40px;
  padding-right: 4px;
  margin-left: 1px;
  background: #828a88;
  color: #e4e7e6;
  font-size: 25px;
  line-height: 40px;
  text-align: center;
`

const ChannelDot = styled(FolderDot)`
  left: 79px;
  top: -7px;
  border-color: #262626;
`

const Docker = styled.footer`
  display: flex;
  height: 56px;
  background: #3c3c3c;
`

const DockMark = styled.button`
  width: 28px;
  color: #fff;
  font: 44px "Liberation Sans", sans-serif;
`

const DockTab = styled.div`
  display: flex;
  align-items: center;
  gap: 15px;
  width: 296px;
  padding-left: 23px;
  clip-path: polygon(0 0, 100% 0, 278px 80%, 278px 100%, 21px 100%);
  background: #7f8a88;
  color: #1c1c1c;
  font: bold 45px "Liberation Sans", sans-serif;
  input {
    appearance: none;
    width: 36px;
    height: 36px;
    border: 1px solid #1c1c1c;
    background:
      linear-gradient(45deg, transparent 49%, #1c1c1c 49%, #1c1c1c 51%, transparent 51%),
      linear-gradient(135deg, transparent 49%, #1c1c1c 49%, #1c1c1c 51%, transparent 51%);
  }
`
